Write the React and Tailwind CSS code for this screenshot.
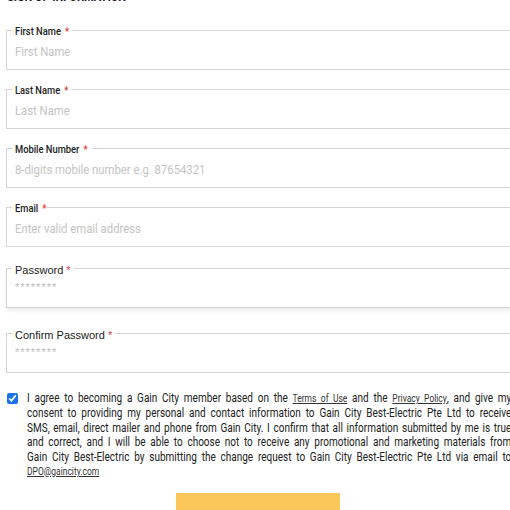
import React from "react";

const rob = { fontFamily: '"Roboto", sans-serif' };

function Field({ label, placeholder, pwd, extra = "" }) {
  return (
    <fieldset
      className={`border border-[#d4d4d4] w-[530px] ml-[6px] pl-[8px] pt-0 h-[48px] ${extra}`}
    >
      <legend
        className={`px-[3px] pt-[4px] ml-[-3px] leading-[12px] text-[#222] ${pwd ? "text-[11px]" : "text-[11px] font-medium"}`}
        style={pwd ? { fontFamily: '"Liberation Sans", sans-serif' } : rob}
      >
        {pwd ? (
          <>
            {label} <span className="text-[#e03a3a]">*</span>
          </>
        ) : (
          <span className="inline-block origin-left scale-x-[0.85] whitespace-nowrap w-max mr-[-10px]">
            {label} <span className="text-[#e03a3a] ml-[2px]">*</span>
          </span>
        )}
      </legend>
      {pwd ? (
        <div className="text-[11px] tracking-[1px] text-[#bcbcbc] mt-[5px] leading-[12px]" style={{ fontFamily: '"Liberation Sans", sans-serif' }}>
          ********
        </div>
      ) : (
        <div className="mt-[5px] leading-[14px]">
          <span className="inline-block origin-left scale-x-[0.87] text-[13px] text-[#c4c4c4] whitespace-nowrap" style={rob}>
            {placeholder}
          </span>
        </div>
      )}
    </fieldset>
  );
}

const Link = ({ children }) => <span className="underline text-[11px] text-[#333]">{children}</span>;

const lines = [
  <>I agree to becoming a Gain City member based on the <Link>Terms of Use</Link> and the <Link>Privacy Policy</Link>, and give my</>,
  <>consent to providing my personal and contact information to Gain City Best-Electric Pte Ltd to receive</>,
  <>SMS, email, direct mailer and phone from Gain City. I confirm that all information submitted by me is true</>,
  <>and correct, and I will be able to choose not to receive any promotional and marketing materials from</>,
  <>Gain City Best-Electric by submitting the change request to Gain City Best-Electric Pte Ltd via email to</>,
];

export default function App() {
  return (
    <div className="w-[510px] h-[510px] overflow-hidden bg-white">
      <div className="mt-[-13px] ml-[7px] leading-[16px]">
        <span className="inline-block origin-left scale-x-[0.85] text-[13px] font-bold text-[#222]" style={rob}>
          SIGN UP INFORMATION
        </span>
      </div>
      <div className="mt-[17px] flex flex-col gap-[11px]">
        <Field label="First Name" placeholder="First Name" />
        <Field label="Last Name" placeholder="Last Name" />
        <Field label="Mobile Number" placeholder="8-digits mobile number e.g. 87654321" />
        <Field label="Email" placeholder="Enter valid email address" />
        <Field label="Password" pwd extra="mt-[2px] shadow-[0_3px_3px_rgba(0,0,0,0.07)]" />
        <Field label="Confirm Password" pwd extra="mt-[6px]" />
      </div>
      <div className="flex mt-[18px] pl-[7px] pr-0">
        <input type="checkbox" defaultChecked className="w-[11px] h-[11px] mt-[2px] accent-[#1a73e8] shrink-0" />
        <div className="ml-[9px] w-[484px] shrink-0">
          <div
            className="origin-left scale-x-[0.77] w-[629px] text-[13px] leading-[14.4px] text-[#222]"
            style={rob}
          >
            {lines.map((l, i) => (
              <div key={i} className="whitespace-nowrap text-justify [text-align-last:justify]">
                {l}
              </div>
            ))}
            <div>
              <Link>DPO@gaincity.com</Link>
            </div>
          </div>
        </div>
      </div>
      <div className="flex justify-center mt-[14px]">
        <div className="w-[164px] h-[20px] bg-[#fcc75a] ml-[6px]" />
      </div>
    </div>
  );
}
